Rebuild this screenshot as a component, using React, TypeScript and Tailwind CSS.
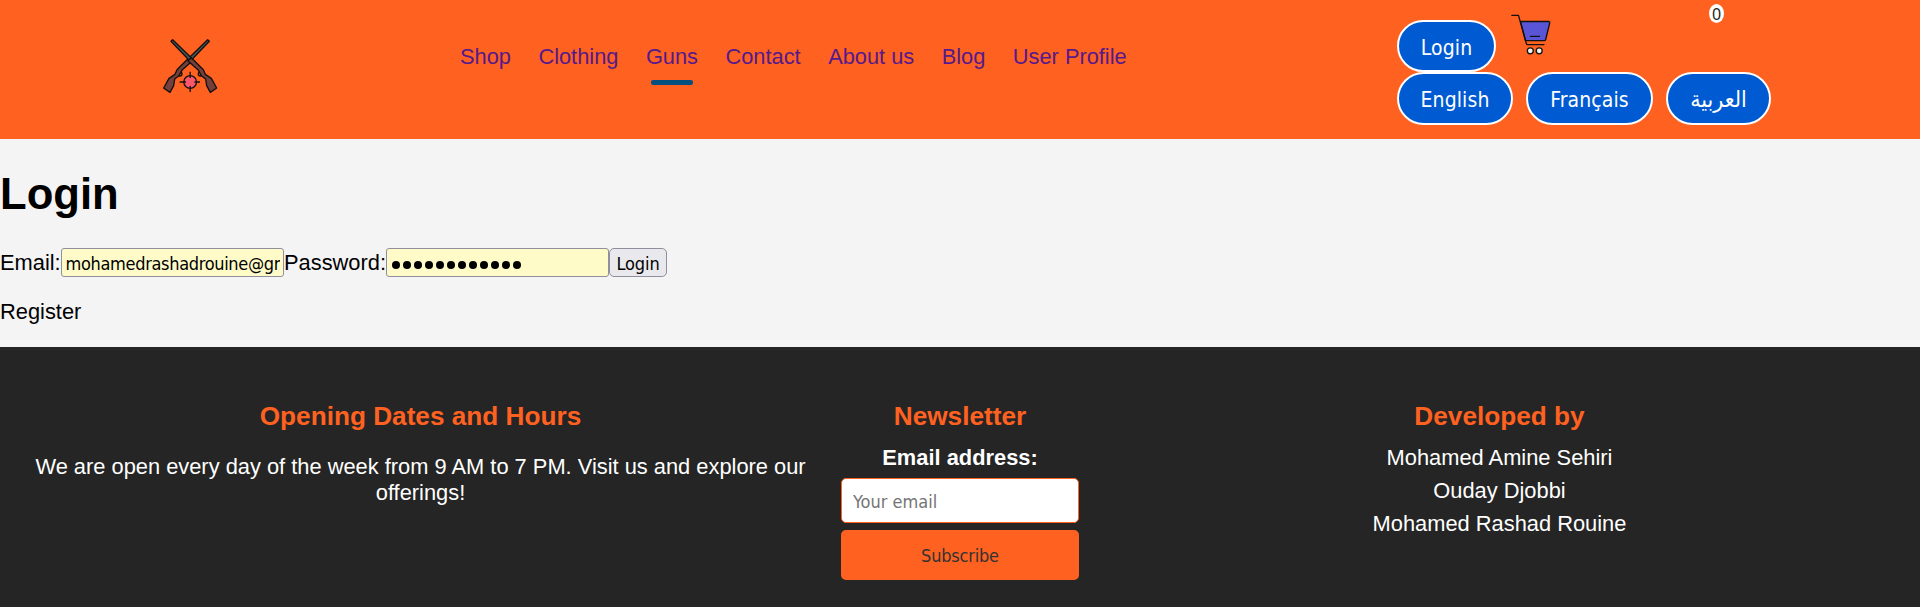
import React from 'react';

const links = ['Shop', 'Clothing', 'Guns', 'Contact', 'About us', 'Blog', 'User Profile'];
const developers = ['Mohamed Amine Sehiri', 'Ouday Djobbi', 'Mohamed Rashad Rouine'];

function Rifle() {
  return (
    <g stroke="#15100f" strokeWidth="4" strokeLinejoin="round">
      <path d="M39 19 44 14 101 70 95 77Z" fill="#47585b" />
      <circle cx="127" cy="117" r="6" fill="none" />
      <path d="M90 78 98 69 106 74 136 104 142 118 160 130 176 159 157 172 146 152 143 132 130 122 120 104Z" fill="#74403c" />
    </g>
  );
}

function Logo() {
  return (
    <svg className="h-[62px] w-[64px]" viewBox="0 0 192 186">
      <g transform="matrix(-1 0 0 1 193 0)"><Rifle /></g>
      <Rifle />
      <circle cx="96.500" cy="141" r="19" fill="#f9586c" stroke="#15100f" strokeWidth="4" />
      <path d="M96.500 110v19M96.500 153v18M65 141h19M109 141h17" stroke="#15100f" strokeWidth="4" />
    </svg>
  );
}

function Cart() {
  return (
    <svg className="h-[41px] w-[40px]" viewBox="0 0 40 41" fill="none" stroke="#111" strokeWidth="1.300" strokeLinecap="round" strokeLinejoin="round">
      <path d="M9.500 7.500H37.500Q39 7.500 38.700 9L34.700 25.500Q34.400 26.600 33.300 26.600H14.500Z" fill="#5a55d6" />
      <path d="M.8 1.300H7.500L15.300 29.500Q15.600 30.600 16.700 30.600H33M19.500 22.400H28.500" />
      <circle cx="19.300" cy="36.800" r="3" fill="#f4f0ea" />
      <circle cx="28.200" cy="36.800" r="3" fill="#f4f0ea" />
    </svg>
  );
}

function Pill({ children, className }: { children: React.ReactNode; className: string }) {
  return (
    <button className={`${className} flex items-center justify-center whitespace-nowrap rounded-[27px] border-2 border-white bg-[#005bd3] font-[DejaVu_Sans_Condensed,DejaVu_Sans,sans-serif] leading-none text-white`}>
      {children}
    </button>
  );
}

function Header() {
  return (
    <header className="flex h-[139px] bg-[#ff6120]">
      <div className="w-[460px] pl-[158px] pt-[35px]"><Logo /></div>
      <nav className="flex w-[937px] gap-[27.500px] pt-[44px] text-[21.800px] leading-[26px] text-[#551a8b]">
        {links.map((link) => (
          <a key={link} className="flex flex-col items-center whitespace-nowrap">
            {link}
            {link === 'Guns' && <span className="mt-[10px] h-[5px] w-[42px] rounded-[2px] bg-[#05507f]" />}
          </a>
        ))}
      </nav>
      <div className="flex w-[374px] flex-col">
        <div className="flex h-[72px] items-start">
          <Pill className="mt-[20px] h-[52px] w-[99px] pt-[5px] text-[21px] tracking-[0.100px]">Login</Pill>
          <div className="ml-[15px] mt-[14px] w-[198px]"><Cart /></div>
          <span className="mt-[4px] flex h-[19px] w-[15px] items-center justify-center rounded-[50%] bg-white pt-[1px] font-[Noto_Sans,sans-serif] text-[16px] leading-none text-[#222]">0</span>
        </div>
        <div className="flex gap-[13px]">
          <Pill className="h-[53px] w-[116px] pt-[3px] text-[21px] tracking-[0.100px]">English</Pill>
          <Pill className="h-[53px] w-[127px] pt-[3px] text-[21px] tracking-[0.100px]">Français</Pill>
          <Pill className="h-[53px] w-[105px] pt-[2px] text-[23px]">العربية</Pill>
        </div>
      </div>
    </header>
  );
}

function LoginForm() {
  return (
    <main className="h-[208px] bg-[#f4f4f4] pt-[29px] text-[21.850px] leading-[26px] text-black">
      <h1 className="text-[43.600px] font-bold leading-[52px]">Login</h1>
      <form className="mt-[28px] flex h-[29px]">
        <label className="w-[61px] whitespace-nowrap pt-[2px]">Email:</label>
        <input
          defaultValue="mohamedrashadrouine@gmail.com"
          className="w-[223px] rounded-[3px] border border-[#8f8f9d] bg-[#fffbc8] px-[3.500px] pt-[2px] font-[DejaVu_Sans_Condensed,DejaVu_Sans,sans-serif] text-[18px] tracking-[-0.320px]"
        />
        <label className="w-[102px] whitespace-nowrap pt-[2px]">Password:</label>
        <div className="flex w-[223px] items-center gap-[3px] rounded-[3px] border border-[#8f8f9d] bg-[#fffbc8] pl-[5px] pt-[4px]">
          {Array.from({ length: 12 }, (_, i) => <span key={i} className="size-[8px] rounded-full bg-black" />)}
        </div>
        <button type="button" className="w-[58px] rounded-[5px] border border-[#8f8f9d] bg-[#e9e9ed] pt-[2px] font-[DejaVu_Sans_Condensed,DejaVu_Sans,sans-serif] text-[18px] leading-none tracking-[-0.100px]">Login</button>
      </form>
      <p className="mt-[22px]">Register</p>
    </main>
  );
}

function Footer() {
  return (
    <footer className="flex h-[260px] bg-[#252525] pt-[54px] text-center text-[21.850px] leading-[26px] text-white">
      <section className="w-[841px] px-[30px]">
        <h3 className="text-[26.200px] font-bold leading-[30px] text-[#ff6120]">Opening Dates and Hours</h3>
        <p className="mt-[23px]">We are open every day of the week from 9 AM to 7 PM. Visit us and explore our offerings!</p>
      </section>
      <section className="flex w-[238px] flex-col">
        <h3 className="text-[26.200px] font-bold leading-[30px] text-[#ff6120]">Newsletter</h3>
        <label className="mt-[14px] font-bold">Email address:</label>
        <input placeholder="Your email" className="mt-[7px] h-[45px] rounded-[5px] border border-[#ff6120] bg-white px-[11px] pt-[2px] font-[DejaVu_Sans_Condensed,DejaVu_Sans,sans-serif] text-[18px] placeholder:text-[#757575]" />
        <button className="mt-[7px] h-[50px] rounded-[5px] bg-[#ff6120] pt-[2px] font-[DejaVu_Sans_Condensed,DejaVu_Sans,sans-serif] text-[18px] tracking-[-0.200px] text-[#333]">Subscribe</button>
      </section>
      <section className="w-[841px]">
        <h3 className="text-[26.200px] font-bold leading-[30px] text-[#ff6120]">Developed by</h3>
        <ul className="mt-[14px] flex flex-col gap-[7px]">
          {developers.map((name) => <li key={name}>{name}</li>)}
        </ul>
      </section>
    </footer>
  );
}

export default function App() {
  return (
    <div className="h-[608px] w-[1920px] overflow-hidden bg-white font-[Liberation_Sans,Arial,sans-serif]">
      <Header />
      <LoginForm />
      <Footer />
    </div>
  );
}
